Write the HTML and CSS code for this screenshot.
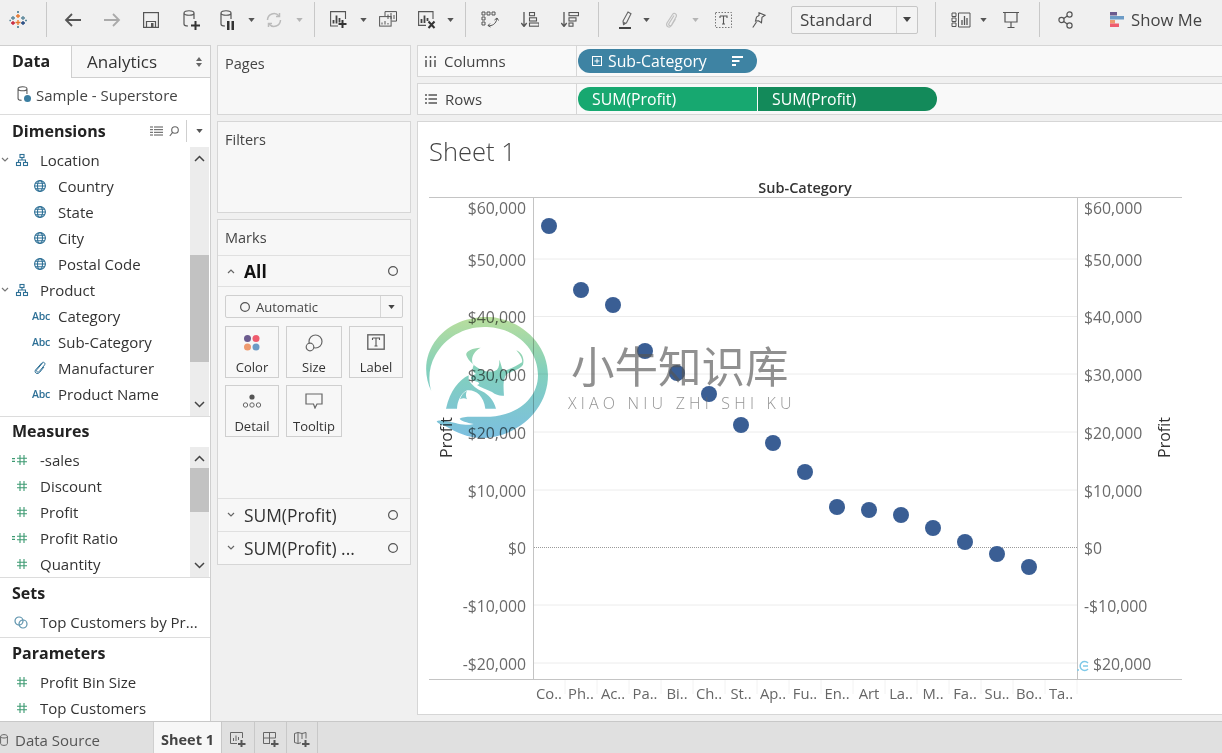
FILE: index.html
```html
<!DOCTYPE html>
<html lang="en">
<head>
<meta charset="utf-8">
<title>Tableau - Sheet 1</title>
<link rel="stylesheet" href="styles.css">
</head>
<body>
<svg class="defs" width="0" height="0">
  <defs>
    <symbol id="caret" viewBox="0 0 8 5"><path d="M0 0h8L4 5z"/></symbol>
    <symbol id="globe" viewBox="0 0 14 14"><g fill="none" stroke="#2e7096" stroke-width="1.1"><circle cx="7" cy="7" r="5.4"/><ellipse cx="7" cy="7" rx="2.5" ry="5.4"/><path d="M1.6 7h10.8M2.4 4.2h9.2M2.4 9.8h9.2"/></g></symbol>
    <symbol id="hier" viewBox="0 0 14 14"><g fill="none" stroke="#2e7096" stroke-width="1.1"><rect x="5" y="1.5" width="4" height="3"/><rect x="1.5" y="9.5" width="4" height="3"/><rect x="8.5" y="9.5" width="4" height="3"/><path d="M7 4.5V7M3.5 9.5V7h7v2.5"/></g></symbol>
    <symbol id="num" viewBox="0 0 12 12"><path d="M4 1v10M8 1v10M1 4.2h10M1 7.8h10" fill="none" stroke="#3d9a72" stroke-width="1.1"/></symbol>
    <symbol id="numc" viewBox="0 0 16 12"><path d="M8 1v10M12 1v10M5 4.2h10M5 7.8h10M0 4.6h3M0 7.4h3" fill="none" stroke="#3d9a72" stroke-width="1.1"/></symbol>
    <symbol id="chev" viewBox="0 0 8 6"><path d="M1 1l3 3 3-3" fill="none" stroke="#777" stroke-width="1.2"/></symbol>
    <symbol id="mark" viewBox="0 0 12 12"><circle cx="6" cy="6" r="4.4" fill="none" stroke="#555" stroke-width="1.2"/></symbol>
    <symbol id="cyl" viewBox="0 0 12 18"><path d="M1 3c0-3 10-3 10 0v6M1 3c0 3 10 3 10 0M1 3v11c0 1.500 2 2 4 2" fill="none" stroke="#555" stroke-width="1.2"/></symbol>
    <symbol id="plus" viewBox="0 0 9 9"><path d="M3.500 0h2v3.500H9v2H5.500V9h-2V5.500H0v-2h3.500z" fill="#333"/></symbol>
  </defs>
</svg>

<header class="toolbar">
  <span class="tool w36"><svg width="18" height="18" viewBox="0 0 18 18" fill="none" stroke-width="1.3"><path d="M9 3v4M7 5h4" stroke="#e8762b"/><path d="M9 9v5M6.500 11.500h5" stroke="#e8762b"/><path d="M4 5v4M2 7h4" stroke="#5b879b"/><path d="M4 10v4M2 12h4" stroke="#c72037"/><path d="M14 5v4M12 7h4" stroke="#5b879b"/><path d="M14 10v4M12 12h4" stroke="#1f457e"/><path d="M9 0v2M8 1h2M9 15v2M8 16h2M1 9v1M0.500 9.500h1.500M17 9v1M16 9.500h2" stroke="#59879b"/></svg></span>
  <span class="tool w20"><i class="sep"></i></span>
  <span class="tool w34"><svg width="18" height="14" viewBox="0 0 18 14"><path d="M17 7H2M8 1L2 7l6 6" fill="none" stroke="#555" stroke-width="1.800"/></svg></span>
  <span class="tool w44"><svg width="18" height="14" viewBox="0 0 18 14"><path d="M1 7h15M10 1l6 6-6 6" fill="none" stroke="#aaa" stroke-width="1.800"/></svg></span>
  <span class="tool w34"><svg width="16" height="16" viewBox="0 0 16 16" fill="none" stroke="#555" stroke-width="1.200"><rect x=".6" y=".6" width="14.800" height="14.800"/><path d="M3.500 15V9.500h9V15"/><rect x="8" y="11" width="2.500" height="4" fill="#555" stroke="none"/></svg></span>
  <span class="tool w44"><span class="stack"><svg class="ic-cyl" width="12" height="18"><use href="#cyl"/></svg><svg class="ic-plus" width="9" height="9"><use href="#plus"/></svg></span></span>
  <span class="tool w30"><span class="stack"><svg class="ic-cyl" width="12" height="18"><use href="#cyl"/></svg><svg class="ic-pause" width="7" height="9" viewBox="0 0 7 9"><path d="M0 0h2.500v9H0zM4.500 0H7v9H4.500z" fill="#333"/></svg></span></span>
  <span class="tool w18 caret"><svg width="7" height="4"><use href="#caret"/></svg></span>
  <span class="tool w28"><svg width="18" height="16" viewBox="0 0 18 16" fill="none" stroke="#bbb" stroke-width="1.500"><path d="M2.500 8a6.500 6.500 0 0 1 11.500-4M15.500 8A6.500 6.500 0 0 1 4 12"/><path d="M11 4.500h3.500V1M7 11.500H3.500V15"/></svg></span>
  <span class="tool w22 caret dim"><svg width="7" height="4"><use href="#caret"/></svg></span>
  <span class="tool w8"><i class="sep"></i></span>
  <span class="tool w40"><svg width="17" height="17" viewBox="0 0 17 17" fill="none" stroke="#555" stroke-width="1.100"><path d="M15.500 8V.6H.6v14.400H8"/><path d="M3.500 12.500V9M6.500 12.500V4.500M9.500 11.500V7" stroke-width="1.800" stroke="#444"/><path d="M11.500 9h2v3h3v2h-3v3h-2v-3h-3v-2h3z" fill="#333" stroke="none"/></svg></span>
  <span class="tool w10 caret"><svg width="7" height="4"><use href="#caret"/></svg></span>
  <span class="tool w40"><svg width="18" height="17" viewBox="0 0 18 17" fill="none" stroke="#555" stroke-width="1"><path d="M6 5V.6h11.500v9.500h-5"/><rect x=".6" y="5.600" width="11.500" height="9.500" fill="#f0f0f0"/><path d="M9 3.500V8M12 2v6M15 4v4M3 13.500v-2M6 13.500v-3.500M9 13.500v-1.500"/></svg></span>
  <span class="tool w38"><svg width="18" height="18" viewBox="0 0 18 18" fill="none" stroke="#555" stroke-width="1.100"><path d="M15 8V.6H.6v13.800H8"/><path d="M3.500 12V8M6.500 12V4.500M9.500 10V7" stroke-width="1.800" stroke="#444"/><path d="M10.500 10.500l6 6.500M16.500 10.500l-6 6.500" stroke="#333" stroke-width="2"/></svg></span>
  <span class="tool w8 caret"><svg width="7" height="4"><use href="#caret"/></svg></span>
  <span class="tool w22"><i class="sep"></i></span>
  <span class="tool w28"><svg width="18" height="17" viewBox="0 0 18 17" fill="none" stroke="#555" stroke-width="1"><path d="M1 1h3v3H1zM6 1h3v3H6zM11 1h3v3h-3zM1 6h3v3H1zM1 11h3v3H1zM7 14.500c4 .8 8-1.500 9-7"/><path d="M13.500 9l2.500-2 1.500 2.500M9 12.500l-2 2 2.500 1.500"/></svg></span>
  <span class="tool w52"><svg width="18" height="15" viewBox="0 0 18 15" fill="none" stroke="#555" stroke-width="1.100"><path d="M3 0v14M.3 11L3 14.500 5.700 11" stroke-width="1.300"/><rect x="8.500" y=".5" width="5" height="3.200"/><rect x="8.500" y="5.800" width="7" height="3.200"/><rect x="8.500" y="11" width="9.500" height="3.200"/></svg></span>
  <span class="tool w28"><svg width="18" height="15" viewBox="0 0 18 15" fill="none" stroke="#555" stroke-width="1.100"><path d="M3 0v14M.3 11L3 14.500 5.700 11" stroke-width="1.300"/><rect x="8" y=".5" width="9.500" height="3.200"/><rect x="8" y="5.800" width="7" height="3.200"/><rect x="8" y="11" width="4" height="3.200"/></svg></span>
  <span class="tool w28"><i class="sep"></i></span>
  <span class="tool w26"><svg width="13" height="18" viewBox="0 0 13 18"><path d="M9 1l3 1.800-4.500 9-3 1.800L4 10z" fill="none" stroke="#666" stroke-width="1.100"/><path d="M4.500 14l-.5-3.500 3 1.500z" fill="#666"/><rect x="0" y="16" width="12" height="2" fill="#444"/></svg></span>
  <span class="tool w16 caret"><svg width="7" height="4"><use href="#caret"/></svg></span>
  <span class="tool w34"><svg width="13" height="17" viewBox="0 0 13 17"><path d="M9 4.500l-5 8c-1 2 1.500 3 2.500 1.500l4.500-8c1.500-3-2-5-3.500-2.500L2 12c-1.500 3.500 2.500 5.500 4.500 2.500L10.500 8" fill="none" stroke="#c0c0c0" stroke-width="1.200"/></svg></span>
  <span class="tool w14 caret dim"><svg width="7" height="4"><use href="#caret"/></svg></span>
  <span class="tool w42"><svg width="17" height="16" viewBox="0 0 17 16"><rect x=".5" y=".5" width="16" height="15" fill="none" stroke="#777" stroke-dasharray="1.500 1.500"/><path d="M5 4h7v2M8.500 4v8M7 12h3M5 4v2" fill="none" stroke="#555" stroke-width="1.100"/></svg></span>
  <span class="tool w30"><svg width="14" height="16" viewBox="0 0 14 16" fill="none" stroke="#555" stroke-width="1.100"><path d="M7 .8l6 2.400-3 2-.5 5.500-3-2L3.500 9l1-4L7 3.500z"/><path d="M4.500 10L.8 15.500"/></svg></span>
  <div class="combo"><span class="combo-label">Standard</span><span class="combo-btn"><svg width="8" height="5"><use href="#caret"/></svg></span></div>
  <span class="tool w34"><i class="sep"></i></span>
  <span class="tool w18"><svg width="20" height="16" viewBox="0 0 20 16" fill="none" stroke="#555" stroke-width="1"><path d="M1 1h4v3.500H1zM1 6h4v3.500H1zM1 11h4v3.500H1zM7.500 1h11.500v14H7.500z"/><path d="M11 13V8M13.500 13V4M16 13V6" stroke-width="1.300"/></svg></span>
  <span class="tool w26 caret"><svg width="7" height="4"><use href="#caret"/></svg></span>
  <span class="tool w30"><svg width="16" height="18" viewBox="0 0 16 18" fill="none" stroke="#555" stroke-width="1.200"><path d="M0 1.500h16M2 2v9h12V2M8 11v5M4.500 16.500h7"/></svg></span>
  <span class="tool w26"><i class="sep"></i></span>
  <span class="tool w28"><svg width="16" height="18" viewBox="0 0 16 18" fill="none" stroke="#555" stroke-width="1.200"><circle cx="11.500" cy="3.500" r="2.600"/><circle cx="3.500" cy="9" r="2.600"/><circle cx="11.500" cy="14.500" r="2.600"/><path d="M5.700 7.500l3.600-2.500M5.700 10.500l3.600 2.500"/></svg></span>
  <div class="showme">
    <svg width="14" height="15" viewBox="0 0 14 15"><rect width="7" height="3.500" fill="#6b5b8e"/><rect y="4" width="14" height="3.500" fill="#6c9bc6"/><rect y="8" width="5" height="3.500" fill="#ee9a6e"/><rect y="11.500" width="9" height="3.500" fill="#ef5c6e"/></svg>
    <span>Show Me</span>
  </div>
</header>

<main class="workspace">
  <aside class="datapane">
    <div class="tabs">
      <div class="tab-data">Data</div>
      <div class="tab-analytics"><span>Analytics</span><svg width="6" height="10" viewBox="0 0 6 10"><path d="M3 0l3 4H0zM3 10L0 6h6z" fill="#666"/></svg></div>
    </div>
    <div class="source">
      <span class="stack src"><svg class="src-cyl" width="11" height="16"><use href="#cyl"/></svg><i class="src-check"></i></span>
      <span>Sample - Superstore</span>
    </div>

    <section class="group dims">
      <div class="group-head">
        <h2>Dimensions</h2>
        <div class="head-tools">
          <svg width="13" height="10" viewBox="0 0 13 10"><path d="M0 1h3M4 1h9M0 3.700h3M4 3.700h9M0 6.300h3M4 6.300h9M0 9h3M4 9h9" stroke="#555" stroke-width="1"/></svg>
          <svg width="10" height="11" viewBox="0 0 10 11" fill="none" stroke="#666" stroke-width="1.100"><circle cx="6" cy="4" r="3.300"/><path d="M3.600 6.400L.8 10"/></svg>
          <i class="head-sep"></i>
          <svg width="7" height="4" fill="#555"><use href="#caret"/></svg>
        </div>
      </div>
      <div class="scrollwrap h269">
        <ul class="fields">
          <li class="parent"><svg class="chev" width="8" height="6"><use href="#chev"/></svg><svg class="ico" width="14" height="14"><use href="#hier"/></svg><span>Location</span></li>
          <li class="child"><svg class="ico" width="14" height="14"><use href="#globe"/></svg><span>Country</span></li>
          <li class="child"><svg class="ico" width="14" height="14"><use href="#globe"/></svg><span>State</span></li>
          <li class="child"><svg class="ico" width="14" height="14"><use href="#globe"/></svg><span>City</span></li>
          <li class="child"><svg class="ico" width="14" height="14"><use href="#globe"/></svg><span>Postal Code</span></li>
          <li class="parent"><svg class="chev" width="8" height="6"><use href="#chev"/></svg><svg class="ico" width="14" height="14"><use href="#hier"/></svg><span>Product</span></li>
          <li class="child"><span class="abc">Abc</span><span>Category</span></li>
          <li class="child"><span class="abc">Abc</span><span>Sub-Category</span></li>
          <li class="child"><svg class="ico" width="14" height="14" viewBox="0 0 14 14"><path d="M9.500 2L4 8.500c-1.500 2 1 3.500 2.300 2L11.500 4c1.500-2-1.200-3.800-2.800-2L2.500 9c-1.800 2.500 2 5 4 2.500L11 6" fill="none" stroke="#2e7096" stroke-width="1"/></svg><span>Manufacturer</span></li>
          <li class="child"><span class="abc">Abc</span><span>Product Name</span></li>
        </ul>
        <div class="scrollbar">
          <svg class="sb-btn" width="11" height="7" viewBox="0 0 11 7"><path d="M1 6l4.500-4.500L10 6" fill="none" stroke="#444" stroke-width="1.500"/></svg>
          <div class="sb-track dims-track"><i></i></div>
          <svg class="sb-btn" width="11" height="7" viewBox="0 0 11 7"><path d="M1 1l4.500 4.500L10 1" fill="none" stroke="#444" stroke-width="1.500"/></svg>
        </div>
      </div>
    </section>

    <section class="group meas">
      <div class="group-head tight"><h2>Measures</h2></div>
      <div class="scrollwrap h130">
        <ul class="fields">
          <li class="leaf calc"><svg width="16" height="12"><use href="#numc"/></svg><span>-sales</span></li>
          <li class="leaf"><svg width="12" height="12"><use href="#num"/></svg><span>Discount</span></li>
          <li class="leaf"><svg width="12" height="12"><use href="#num"/></svg><span>Profit</span></li>
          <li class="leaf calc"><svg width="16" height="12"><use href="#numc"/></svg><span>Profit Ratio</span></li>
          <li class="leaf"><svg width="12" height="12"><use href="#num"/></svg><span>Quantity</span></li>
        </ul>
        <div class="scrollbar">
          <svg class="sb-btn" width="11" height="7" viewBox="0 0 11 7"><path d="M1 6l4.500-4.500L10 6" fill="none" stroke="#444" stroke-width="1.500"/></svg>
          <div class="sb-track meas-track"><i></i></div>
          <svg class="sb-btn" width="11" height="7" viewBox="0 0 11 7"><path d="M1 1l4.500 4.500L10 1" fill="none" stroke="#444" stroke-width="1.500"/></svg>
        </div>
      </div>
    </section>

    <section class="group sets">
      <div class="group-head short"><h2>Sets</h2></div>
      <ul class="fields">
        <li class="leaf"><svg width="14" height="13" viewBox="0 0 14 13" fill="none" stroke="#5d93ad" stroke-width="1.200"><circle cx="5" cy="5" r="4"/><circle cx="9" cy="8" r="4"/></svg><span>Top Customers by Pr...</span></li>
      </ul>
    </section>

    <section class="group params">
      <div class="group-head short"><h2>Parameters</h2></div>
      <ul class="fields">
        <li class="leaf"><svg width="12" height="12"><use href="#num"/></svg><span>Profit Bin Size</span></li>
        <li class="leaf"><svg width="12" height="12"><use href="#num"/></svg><span>Top Customers</span></li>
      </ul>
    </section>
  </aside>

  <div class="cards">
    <section class="card pages"><h3>Pages</h3></section>
    <section class="card filters"><h3>Filters</h3></section>
    <section class="card marks">
      <h3>Marks</h3>
      <div class="mark-row all">
        <svg width="10" height="6" viewBox="0 0 8 6"><path d="M1 5l3-3 3 3" fill="none" stroke="#666" stroke-width="1.200"/></svg>
        <strong>All</strong>
        <svg class="m-end" width="12" height="12"><use href="#mark"/></svg>
      </div>
      <div class="marks-body">
        <div class="mark-type">
          <svg width="12" height="12"><use href="#mark"/></svg><span>Automatic</span>
          <span class="mt-btn"><svg width="7" height="4" fill="#444"><use href="#caret"/></svg></span>
        </div>
        <div class="mark-grid">
          <div class="mbtn">
            <svg width="18" height="18" viewBox="0 0 18 18"><circle cx="4.500" cy="4.500" r="3.500" fill="#6b5b8e"/><circle cx="13" cy="4.500" r="3.500" fill="#ef5c6e"/><circle cx="4.500" cy="13" r="3.500" fill="#ee9a6e"/><circle cx="13" cy="13" r="3.500" fill="#6c9bc6"/></svg>
            <span>Color</span>
          </div>
          <div class="mbtn">
            <svg width="18" height="18" viewBox="0 0 18 18" fill="none" stroke="#666" stroke-width="1.200"><circle cx="10.500" cy="7.500" r="6.500"/><circle cx="5" cy="13" r="3.800" fill="#f7f7f7"/></svg>
            <span>Size</span>
          </div>
          <div class="mbtn">
            <svg width="18" height="16" viewBox="0 0 18 16"><rect x=".8" y=".8" width="16.400" height="14.400" fill="none" stroke="#666" stroke-width="1.400"/><path d="M5.500 4h7v2M9 4v8M7.500 12h3M5.500 4v2" fill="none" stroke="#555" stroke-width="1.100"/></svg>
            <span>Label</span>
          </div>
          <div class="mbtn">
            <svg width="20" height="16" viewBox="0 0 20 16"><circle cx="10" cy="4" r="2.600" fill="#555"/><g fill="none" stroke="#666" stroke-width="1"><circle cx="3.500" cy="12" r="2.200"/><circle cx="10" cy="12" r="2.200"/><circle cx="16.500" cy="12" r="2.200"/></g></svg>
            <span>Detail</span>
          </div>
          <div class="mbtn">
            <svg width="18" height="16" viewBox="0 0 18 16"><path d="M1 1h16v10h-5l-2 4-1.500-4H1z" fill="none" stroke="#666" stroke-width="1.200"/></svg>
            <span>Tooltip</span>
          </div>
        </div>
      </div>
      <div class="mark-row sub">
        <svg width="10" height="6" viewBox="0 0 8 6"><path d="M1 1l3 3 3-3" fill="none" stroke="#666" stroke-width="1.200"/></svg>
        <span>SUM(Profit)</span>
        <svg class="m-end" width="12" height="12"><use href="#mark"/></svg>
      </div>
      <div class="mark-row sub">
        <svg width="10" height="6" viewBox="0 0 8 6"><path d="M1 1l3 3 3-3" fill="none" stroke="#666" stroke-width="1.200"/></svg>
        <span>SUM(Profit) ...</span>
        <svg class="m-end" width="12" height="12"><use href="#mark"/></svg>
      </div>
    </section>
  </div>

  <div class="viewcol">
    <div class="shelf">
      <div class="shelf-label"><svg width="11" height="11" viewBox="0 0 11 11"><path d="M1 4v7M5.500 4v7M10 4v7M1 0v2M5.500 0v2M10 0v2" stroke="#555" stroke-width="1.500"/></svg><span>Columns</span></div>
      <div class="pills">
        <div class="pill blue"><svg width="10" height="10" viewBox="0 0 10 10" fill="none" stroke="#fff"><rect x=".5" y=".5" width="9" height="9"/><path d="M2.500 5h5M5 2.500v5"/></svg><span>Sub-Category</span><svg class="p-sort" width="11" height="10" viewBox="0 0 11 10"><path d="M0 0h11v2H0zM0 4h7.500v2H0zM0 8h4v2H0z" fill="#fff"/></svg></div>
      </div>
    </div>
    <div class="shelf">
      <div class="shelf-label"><svg width="12" height="10" viewBox="0 0 12 10"><path d="M0 1h2M3.500 1H12M0 5h2M3.500 5H12M0 9h2M3.500 9H12" stroke="#555" stroke-width="1.500"/></svg><span>Rows</span></div>
      <div class="pills">
        <div class="pill green first"><span>SUM(Profit)</span></div>
        <div class="pill green second"><span>SUM(Profit)</span></div>
      </div>
    </div>
    <section class="sheet">
      <svg class="chart" width="804" height="592" viewBox="418 122 804 592">
        <defs>
          <linearGradient id="wm" gradientUnits="userSpaceOnUse" x1="0" y1="15" x2="0" y2="378">
            <stop offset="0" stop-color="#b9de9c"/>
            <stop offset=".45" stop-color="#82d0bd"/>
            <stop offset="1" stop-color="#7cbfe0"/>
          </linearGradient>
        </defs>
        <text class="sheet-title" x="429" y="161">Sheet 1</text>
        <text class="hdr" x="805" y="193">Sub-Category</text>

        <g class="grid">
          <path d="M534 259h543M534 316.500h543M534 374h543M534 432h543M534 490h543M534 605h543M534 663h543"/>
        </g>
        <path class="zero" d="M534 547.500h543"/>
        <path class="frame" d="M429 197.500h753M429 679.500h753M533.500 197v483M1077.500 197v483"/>
        <g class="ticks"><path d="M565 680v14M597 680v14M629 680v14M661 680v14M693 680v14M725 680v14M757 680v14M789 680v14M821 680v14M853 680v14M885 680v14M917 680v14M949 680v14M981 680v14M1013 680v14M1045 680v14M1077 680v14"/></g>

        <g class="axis left">
          <text x="526" y="214">$60,000</text><text x="526" y="266">$50,000</text><text x="526" y="323">$40,000</text><text x="526" y="381">$30,000</text><text x="526" y="439">$20,000</text><text x="526" y="497">$10,000</text><text x="526" y="554">$0</text><text x="526" y="612">-$10,000</text><text x="526" y="670">-$20,000</text>
        </g>
        <g class="axis right">
          <text x="1084" y="214">$60,000</text><text x="1084" y="266">$50,000</text><text x="1084" y="323">$40,000</text><text x="1084" y="381">$30,000</text><text x="1084" y="439">$20,000</text><text x="1084" y="497">$10,000</text><text x="1084" y="554">$0</text><text x="1084" y="612">-$10,000</text><text x="1093" y="670">$20,000</text>
        </g>
        <text class="ytitle" transform="translate(452 437.500) rotate(-90)">Profit</text>
        <text class="ytitle" transform="translate(1170 437.500) rotate(-90)">Profit</text>

        <g class="cats">
          <text x="549" y="699">Co..</text><text x="581" y="699">Ph..</text><text x="613" y="699">Ac..</text><text x="645" y="699">Pa..</text><text x="677" y="699">Bi..</text><text x="709" y="699">Ch..</text><text x="741" y="699">St..</text><text x="773" y="699">Ap..</text><text x="805" y="699">Fu..</text><text x="837" y="699">En..</text><text x="869" y="699">Art</text><text x="901" y="699">La..</text><text x="933" y="699">M..</text><text x="965" y="699">Fa..</text><text x="997" y="699">Su..</text><text x="1029" y="699">Bo..</text><text x="1061" y="699">Ta..</text>
        </g>

        <g class="dots">
          <circle cx="549" cy="226" r="8"/><circle cx="581" cy="290" r="8"/><circle cx="613" cy="305" r="8"/><circle cx="645" cy="351" r="8"/><circle cx="677" cy="373" r="8"/><circle cx="709" cy="394" r="8"/><circle cx="741" cy="425" r="8"/><circle cx="773" cy="443" r="8"/><circle cx="805" cy="472" r="8"/><circle cx="837" cy="507" r="8"/><circle cx="869" cy="510" r="8"/><circle cx="901" cy="515" r="8"/><circle cx="933" cy="528" r="8"/><circle cx="965" cy="542" r="8"/><circle cx="997" cy="554" r="8"/><circle cx="1029" cy="567" r="8"/>
        </g>

        <g class="wm-logo" transform="translate(422 312) scale(.3333)" fill="url(#wm)">
          <path d="M28 238C5 190 5 130 45 80C85 30 150 12 205 15C290 22 378 90 378 190C378 290 290 378 175 378C135 376 105 362 75 345C65 340 50 338 44 328C50 322 80 328 108 335C125 338 145 340 155 336C135 332 115 326 113 320C125 310 165 316 205 314C285 310 348 260 348 190C348 110 280 48 195 45C130 42 70 75 40 130C20 165 18 205 28 238Z"/>
          <path d="M176 107C150 108 130 118 133 130C138 146 160 166 180 174C195 180 215 181 225 173C232 166 232 155 232 143C238 155 238 170 246 177C262 172 285 162 300 151C303 140 292 125 283 115C300 122 308 140 303 158C295 172 270 176 255 186C245 196 243 215 246 251C235 253 222 249 210 240C195 233 175 226 165 219C180 214 165 207 152 206C142 197 147 191 162 186C150 178 150 170 155 160C146 148 148 122 176 107Z"/>
          <path d="M140 190C110 205 85 235 72 290H105C106 270 115 245 135 235C160 232 185 250 190 290H222C215 265 200 248 180 238C165 232 150 220 140 205Z"/>
          <path d="M114 262C118 250 125 240 135 237C130 245 132 255 135 262C128 258 122 258 114 262Z"/>
        </g>
        <text class="wm-cn" x="571" y="383">小牛知识库</text>
        <text class="wm-en" x="568" y="409">XIAO NIU ZHI SHI KU</text>
        <path class="wm-tail" d="M1088 663a4.500 4.500 0 1 0 0 6M1083 666h5M1077 670h2"/>
      </svg>
    </section>
  </div>
</main>

<footer class="tabbar">
  <div class="ds-tab"><svg width="8" height="12" viewBox="0 0 8 12"><path d="M.6 2.500c0-2.500 6.800-2.500 6.800 0v7c0 2.500-6.800 2.500-6.800 0zM.6 2.500c0 2 6.800 2 6.800 0" fill="none" stroke="#666"/></svg><span>Data Source</span></div>
  <div class="sheet-tab">Sheet 1</div>
  <div class="new-tab"><svg width="16" height="15" viewBox="0 0 16 15" fill="none" stroke="#666"><path d="M12.500 6V.5H.5v11H7M3.500 9V6M6 9V3.500M8.500 8V5"/><path d="M10.500 8h2v3H15.500v2H12.500v2h-2v-2H8v-2h2.500z" fill="#555" stroke="none"/></svg></div>
  <div class="new-tab t2"><svg width="16" height="15" viewBox="0 0 16 15" fill="none" stroke="#666"><path d="M12.500 6V.5H.5v11H7M.5 6h12M6.500.5v11"/><path d="M10.500 8h2v3H15.500v2H12.500v2h-2v-2H8v-2h2.500z" fill="#555" stroke="none"/></svg></div>
  <div class="new-tab t3"><svg width="16" height="15" viewBox="0 0 16 15" fill="none" stroke="#666"><path d="M.5 1.500l3.500-1 4 1 4-1v6M.5 1.500v9l3.500 1 3-.8M4 .5v11M8 1.500V7"/><path d="M10.500 8h2v3H15.500v2H12.500v2h-2v-2H8v-2h2.500z" fill="#555" stroke="none"/></svg></div>
</footer>
</body>
</html>
```

FILE: styles.css
```css
* { box-sizing: border-box; }
html, body { margin: 0; padding: 0; }
body {
  width: 1222px;
  height: 753px;
  overflow: hidden;
  background: #f0f0f0;
  color: #333;
  font-family: "Open Sans", "Noto Sans", sans-serif;
  font-size: 14px;
  display: flex;
  flex-direction: column;
}
h2, h3, ul { margin: 0; padding: 0; list-style: none; }
.defs { position: absolute; }

/* toolbar */
.toolbar { height: 45px; padding-bottom: 6px; display: flex; align-items: center; flex: none; }
.tool { display: flex; align-items: center; justify-content: center; height: 34px; flex: none; fill: #666; }
.tool svg { flex: none; }
.caret { fill: #555; }
.dim { fill: #b5b5b5; }
.sep { display: block; width: 1px; height: 35px; background: #c8c8c8; }
.w8 { width: 8px; } .w10 { width: 10px; } .w14 { width: 14px; } .w16 { width: 16px; } .w18 { width: 18px; }
.w20 { width: 20px; } .w22 { width: 22px; } .w26 { width: 26px; } .w28 { width: 28px; } .w30 { width: 30px; }
.w34 { width: 34px; } .w36 { width: 36px; } .w38 { width: 38px; } .w40 { width: 40px; } .w42 { width: 42px; }
.w44 { width: 44px; } .w52 { width: 52px; }
.stack { position: relative; display: block; width: 14px; height: 20px; }
.ic-cyl { position: absolute; left: 0; top: 0; }
.ic-plus { position: absolute; left: 8px; top: 11px; }
.ic-pause { position: absolute; left: 7px; top: 11px; }
.combo { width: 127px; height: 28px; margin-left: 17px; display: flex; border: 1px solid #c6c6c6; border-radius: 2px; background: #f3f3f3; flex: none; }
.combo-label { flex: 1; padding-left: 8px; font-size: 17px; line-height: 25px; color: #444; }
.combo-btn { width: 21px; border-left: 1px solid #d2d2d2; display: flex; align-items: center; justify-content: center; fill: #444; }
.showme { margin-left: 30px; padding-bottom: 1px; display: flex; align-items: center; gap: 7px; font-size: 16.700px; color: #444; flex: none; }

/* workspace */
.workspace { height: 676px; display: flex; flex: none; }
.datapane { width: 211px; background: #fff; border-right: 1px solid #cfcfcf; border-top: 1px solid #cfcfcf; flex: none; display: flex; flex-direction: column; }
.tabs { height: 32px; display: flex; flex: none; }
.tab-data { width: 71px; padding-left: 12px; font-size: 16px; font-weight: 700; color: #222; line-height: 30px; }
.tab-analytics { flex: 1; padding: 0 8px 0 15px; background: #f7f7f7; border-left: 1px solid #cfcfcf; border-bottom: 1px solid #cfcfcf; display: flex; align-items: center; justify-content: space-between; font-size: 17px; color: #333; }
.source { height: 37px; display: flex; align-items: center; padding: 0 0 2px 17px; gap: 5px; border-bottom: 1px solid #dcdcdc; color: #444; font-size: 15px; flex: none; }
.src { width: 14px; height: 18px; }
.src-cyl { position: absolute; left: 0; top: 0; }
.src-check { position: absolute; left: 7px; top: 9px; width: 7px; height: 7px; border-radius: 50%; background: #3a7ea1; }
.group { border-bottom: 1px solid #dcdcdc; flex: none; }
.group:last-child { border-bottom: 0; flex: 1; }
.group-head { height: 32px; display: flex; align-items: center; padding-left: 12px; }
.group-head.tight { height: 30px; padding-bottom: 2px; }
.group-head.short { height: 31px; padding-bottom: 1px; }
.group-head h2 { font-size: 16px; font-weight: 700; color: #222; line-height: 20px; }
.head-tools { margin-left: auto; display: flex; align-items: center; gap: 6px; padding-right: 7px; height: 100%; }
.head-sep { display: block; width: 1px; height: 22px; background: #cfcfcf; margin: 0 3px 0 1px; }
.scrollwrap { display: flex; }
.h269 { height: 269px; }
.h130 { height: 130px; }
.fields { flex: 1; min-width: 0; }
.fields li { height: 26px; display: flex; align-items: center; color: #333; font-size: 15px; white-space: nowrap; }
.parent { padding-left: 1px; }
.parent .chev { margin-right: 6px; }
.parent .ico { margin-right: 11px; }
.child { padding-left: 33px; }
.child .ico { margin-right: 11px; flex: none; }
.abc { width: 26px; margin-left: -1px; font-size: 10.500px; font-weight: 600; color: #2e7096; flex: none; letter-spacing: -.2px; }
.leaf { padding-left: 16px; gap: 12px; }
.calc { padding-left: 12px; gap: 12px; }
.sets .leaf { padding-left: 14px; }
.scrollbar { width: 19px; margin-right: 1px; background: #ececec; display: flex; flex-direction: column; align-items: center; flex: none; }
.sb-btn { flex: none; margin: 8px 0; }
.sb-track { flex: 1; width: 100%; display: flex; flex-direction: column; margin: -4px 0; }
.sb-track i { display: block; width: 100%; background: #c2c2c2; }
.dims-track { padding-top: 89px; }
.dims-track i { height: 107px; }
.meas-track { padding-top: 2px; }
.meas-track i { height: 44px; }
.meas { height: 161px; }
.sets { height: 60px; }

/* cards */
.cards { width: 206px; padding: 0 6px; display: flex; flex-direction: column; gap: 6px; flex: none; }
.card { background: #f7f7f7; border: 1px solid #d6d6d6; flex: none; }
.card h3 { font-size: 14.500px; font-weight: 400; color: #444; padding: 8px 7px 0; line-height: 20px; }
.pages { height: 70px; }
.filters { height: 92px; }
.marks { height: 346px; display: flex; flex-direction: column; }
.marks h3 { height: 36px; border-bottom: 1px solid #e0e0e0; flex: none; }
.mark-row { height: 33px; display: flex; align-items: center; padding: 0 11px 0 8px; gap: 8px; flex: none; }
.mark-row.all { border-bottom: 1px solid #e0e0e0; font-size: 17.500px; color: #111; height: 31px; }
.mark-row.all strong { font-weight: 700; }
.mark-row.sub { border-top: 1px solid #e0e0e0; font-size: 17.400px; color: #333; padding-bottom: 1px; }
.m-end { margin-left: auto; }
.marks-body { flex: 1; padding: 8px 7px 0; }
.mark-type { height: 23px; border: 1px solid #cfcfcf; display: flex; align-items: center; padding-left: 13px; gap: 5px; font-size: 13px; color: #444; border-radius: 2px; }
.mt-btn { margin-left: auto; width: 22px; height: 100%; border-left: 1px solid #d6d6d6; display: flex; align-items: center; justify-content: center; }
.mark-grid { display: grid; grid-template-columns: 54px 56px 54px; column-gap: 7px; row-gap: 7px; margin-top: 8px; }
.mbtn { height: 52px; border: 1px solid #cfcfcf; display: flex; flex-direction: column; align-items: center; justify-content: space-between; padding: 7px 0 2px; font-size: 13px; color: #333; line-height: 16px; }

/* shelves + sheet */
.viewcol { flex: 1; min-width: 0; display: flex; flex-direction: column; gap: 6px; }
.shelf { height: 32px; background: #f9f9f9; border: 1px solid #d6d6d6; border-right: 0; display: flex; flex: none; }
.shelf-label { width: 159px; border-right: 1px solid #d6d6d6; display: flex; align-items: center; gap: 8px; padding-left: 7px; font-size: 15px; color: #444; flex: none; }
.pills { display: flex; align-items: center; padding-left: 1px; gap: 1px; }
.pill { height: 24px; width: 179px; display: flex; align-items: center; color: #fff; font-size: 15.800px; }
.pill.blue { background: #3e83a3; border-radius: 12px; padding: 0 14px; gap: 6px; }
.p-sort { margin-left: auto; }
.pill.first { background: #17a870; border-radius: 12px 0 0 12px; padding-left: 14px; }
.pill.second { background: #138a5a; border-radius: 0 12px 12px 0; padding-left: 14px; }
.sheet { height: 594px; background: #fff; border: 1px solid #d6d6d6; border-right: 0; flex: none; overflow: hidden; }
.chart { display: block; font-family: "Open Sans", "Noto Sans", sans-serif; }
.sheet-title { font-size: 25.500px; font-weight: 300; fill: #444; }
.hdr { font-size: 14.500px; font-weight: 600; fill: #333; text-anchor: middle; }
.grid path { stroke: #ececec; fill: none; }
.zero { stroke: #9a9a9a; stroke-dasharray: 1 1; fill: none; }
.frame { stroke: #c4c4c4; fill: none; }
.ticks path { stroke: #f2f2f2; fill: none; }
.axis text { font-size: 15.800px; fill: #6a6a6a; }
.axis.left text { text-anchor: end; }
.ytitle { font-size: 16px; fill: #333; text-anchor: middle; }
.cats text { font-size: 14.800px; fill: #666; text-anchor: middle; }
.dots circle { fill: #3a5e94; }
.wm-logo { mix-blend-mode: multiply; }
.wm-cn { font-family: "Noto Sans CJK SC", sans-serif; font-size: 43.500px; font-weight: 400; fill: #555; opacity: .65; }
.wm-en { font-size: 16px; font-weight: 300; letter-spacing: 4.200px; fill: #666; opacity: .7; }
.wm-tail { stroke: #7fc9e8; fill: none; stroke-width: 1.500; }

/* tabs at the bottom */
.tabbar { height: 32px; background: #e0e0e0; border-top: 1px solid #c8c8c8; display: flex; flex: none; }
.ds-tab { width: 153px; display: flex; align-items: center; gap: 7px; font-size: 15px; color: #555; padding-top: 4px; }
.sheet-tab { width: 68px; background: #f7f7f7; border-left: 1px solid #cfcfcf; font-size: 14.500px; font-weight: 700; color: #444; text-align: center; line-height: 36px; height: 100%; }
.new-tab { width: 33px; border-left: 1px solid #c8c8c8; display: flex; align-items: center; justify-content: center; padding-top: 3px; }
.new-tab.t2 { width: 32px; }
.new-tab.t3 { width: 32px; border-right: 1px solid #c8c8c8; }
```
